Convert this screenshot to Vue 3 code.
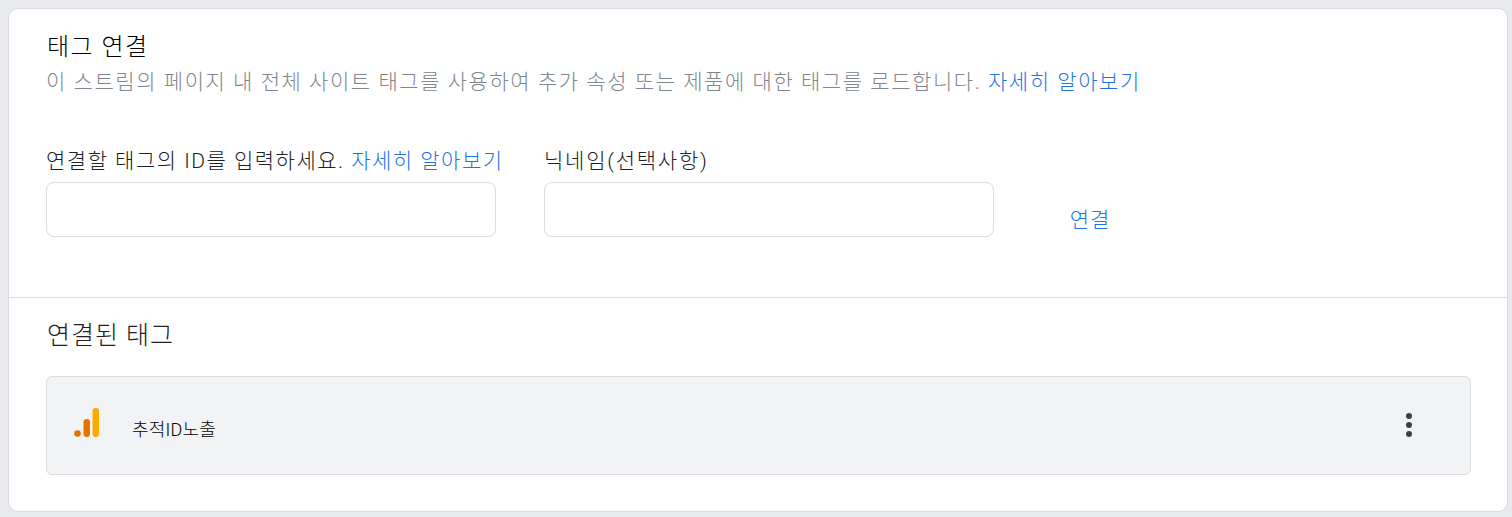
<template>
  <div class="page">
    <div class="card">
      <section class="connect">
        <h2 class="title">태그 연결</h2>
        <p class="desc">
          이 스트림의 페이지 내 전체 사이트 태그를 사용하여 추가 속성 또는 제품에 대한 태그를 로드합니다.
          <a class="link">자세히 알아보기</a>
        </p>
        <div class="form">
          <div class="field first">
            <label>연결할 태그의 ID를 입력하세요. <a class="link">자세히 알아보기</a></label>
            <input type="text" />
          </div>
          <div class="field nick">
            <label>닉네임(선택사항)</label>
            <input type="text" />
          </div>
          <button class="connect-btn">연결</button>
        </div>
      </section>
      <section class="linked">
        <h3 class="subtitle">연결된 태그</h3>
        <div class="row">
          <svg class="logo" width="26" height="30" viewBox="0 0 26 30">
            <rect x="18.5" y="0" width="6.5" height="29" rx="3.25" fill="#f9ab00" />
            <rect x="9.5" y="11" width="6.5" height="18" rx="3.25" fill="#e37400" />
            <circle cx="3.5" cy="25.5" r="3.3" fill="#e37400" />
          </svg>
          <span class="name">추적ID노출</span>
          <div class="more">
            <i></i>
            <i></i>
            <i></i>
          </div>
        </div>
      </section>
    </div>
  </div>
</template>

<script setup>
</script>

<style>
html,
body {
  margin: 0;
  background: #e8eaed;
}
</style>

<style scoped>
.page {
  height: 517px;
  box-sizing: border-box;
  padding: 8px 4px 5px 8px;
  font-family: "Roboto", "Noto Sans CJK KR", sans-serif;
}

.card {
  height: 100%;
  box-sizing: border-box;
  background: #fff;
  border: 1px solid #dadce0;
  border-radius: 10px;
  display: flex;
  flex-direction: column;
}

.connect {
  height: 289px;
  box-sizing: border-box;
  padding: 22px 37px 0;
  border-bottom: 1px solid #dadce0;
}

.title {
  margin: 0 0 0 1px;
  font-size: 24px;
  line-height: 32px;
  font-weight: 300;
  letter-spacing: 1.5px;
  color: #000;
}

.desc {
  margin: 4px 0 0;
  font-size: 21px;
  line-height: 30px;
  font-weight: 300;
  letter-spacing: 1.56px;
  color: #80868b;
  white-space: nowrap;
}

.link {
  color: #1a73e8;
}

.form {
  display: flex;
  margin-top: 49px;
}

.field {
  width: 450px;
  margin-right: 48px;
  display: flex;
  flex-direction: column;
}

.field label {
  font-size: 21px;
  line-height: 30px;
  font-weight: 300;
  letter-spacing: 1.5px;
  color: #202124;
  white-space: nowrap;
}

.nick label {
  letter-spacing: 1.75px;
}

.field input {
  height: 55px;
  box-sizing: border-box;
  margin-top: 6px;
  border: 1px solid #dadce0;
  border-radius: 8px;
  background: #fff;
}

.connect-btn {
  border: 0;
  background: none;
  padding: 0;
  margin: 59px 0 0 26px;
  width: 44px;
  height: 30px;
  font-family: inherit;
  font-size: 21px;
  line-height: 30px;
  font-weight: 300;
  letter-spacing: 1px;
  white-space: nowrap;
  color: #1a73e8;
}

.linked {
  padding: 20px 36px 0 37px;
}

.subtitle {
  margin: 0 0 0 1px;
  font-size: 25px;
  line-height: 36px;
  font-weight: 300;
  letter-spacing: 1px;
  color: #202124;
}

.row {
  margin-top: 22px;
  height: 99px;
  box-sizing: border-box;
  background: #f1f3f4;
  border: 1px solid #dadce0;
  border-radius: 6px;
  display: flex;
  align-items: center;
  padding-left: 27px;
}

.logo {
  margin-top: -6px;
}

.name {
  margin-left: 32px;
  margin-top: 4px;
  font-size: 18px;
  font-weight: 300;
  letter-spacing: 0.2px;
  color: #000;
}

.more {
  margin-left: auto;
  margin-right: 58px;
  margin-top: -2px;
  display: flex;
  flex-direction: column;
  gap: 3px;
}

.more i {
  width: 6px;
  height: 6px;
  border-radius: 50%;
  background: #3c4043;
}
</style>
